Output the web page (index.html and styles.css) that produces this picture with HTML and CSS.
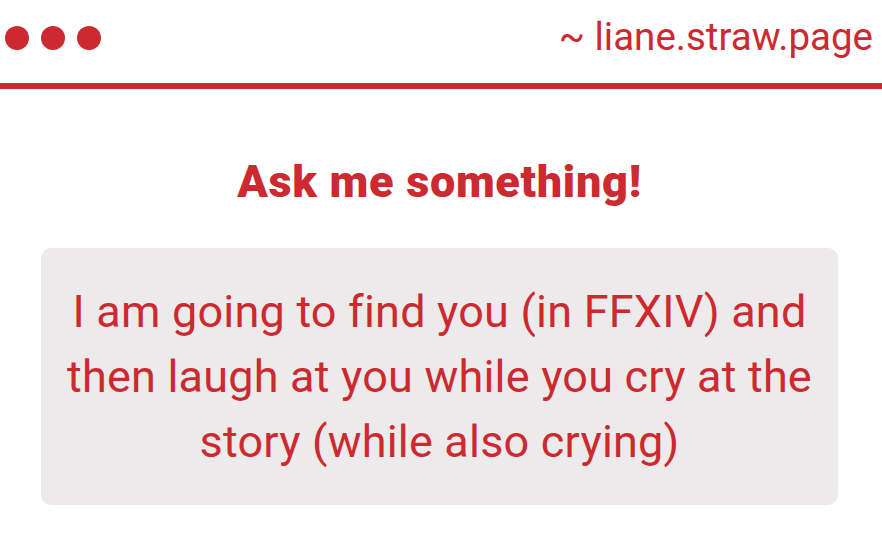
FILE: index.html
```html
<!DOCTYPE html>
<html lang="en">

<head>
  <meta charset="UTF-8">
  <meta name="viewport" content="width=device-width, initial-scale=1.0">
  <title>Ask me something</title>
  <link rel="stylesheet" href="styles.css">
</head>

<body>

  <!-- Window bar -->
  <div class="topbar">
    <div class="dots">
      <span class="dot"></span>
      <span class="dot"></span>
      <span class="dot"></span>
    </div>
    <div class="site">~ liane.straw.page</div>
  </div>

  <!-- Question -->
  <div class="ask">
    <h1>Ask me something!</h1>
    <div class="question">
      I am going to find you (in FFXIV) and then laugh at you while you cry at the story (while also crying)
    </div>
  </div>

</body>

</html>
```

FILE: styles.css
```css
body {
  font-family: Roboto, "Noto Sans", sans-serif;
  margin: 0;
  padding: 0;
  background: white;
  color: #cc2a30;
}

/* Window bar */
.topbar {
  height: 83px;
  display: flex;
  align-items: center;
  justify-content: space-between;
  padding: 0 9px 0 5px;
  border-bottom: 6px solid #cc2a30;
  box-sizing: content-box;
}

.dots {
  display: flex;
  gap: 12px;
  margin-top: -7px;
}

.dot {
  width: 24px;
  height: 24px;
  border-radius: 50%;
  background: #cc2a30;
}

.site {
  font-size: 38.5px;
  margin-top: -10px;
}

/* Question */
.ask {
  padding: 0 44px 0 41px;
}

.ask h1 {
  margin: 69px 0 0;
  text-align: center;
  font-size: 45px;
  font-weight: 900;
  line-height: 48px;
  letter-spacing: 0.7px;
}

.question {
  margin-top: 42px;
  background: #eceaeb;
  border-radius: 10px;
  padding: 31px 20px;
  text-align: center;
  font-size: 45px;
  line-height: 65px;
  letter-spacing: 0.2px;
}
```
